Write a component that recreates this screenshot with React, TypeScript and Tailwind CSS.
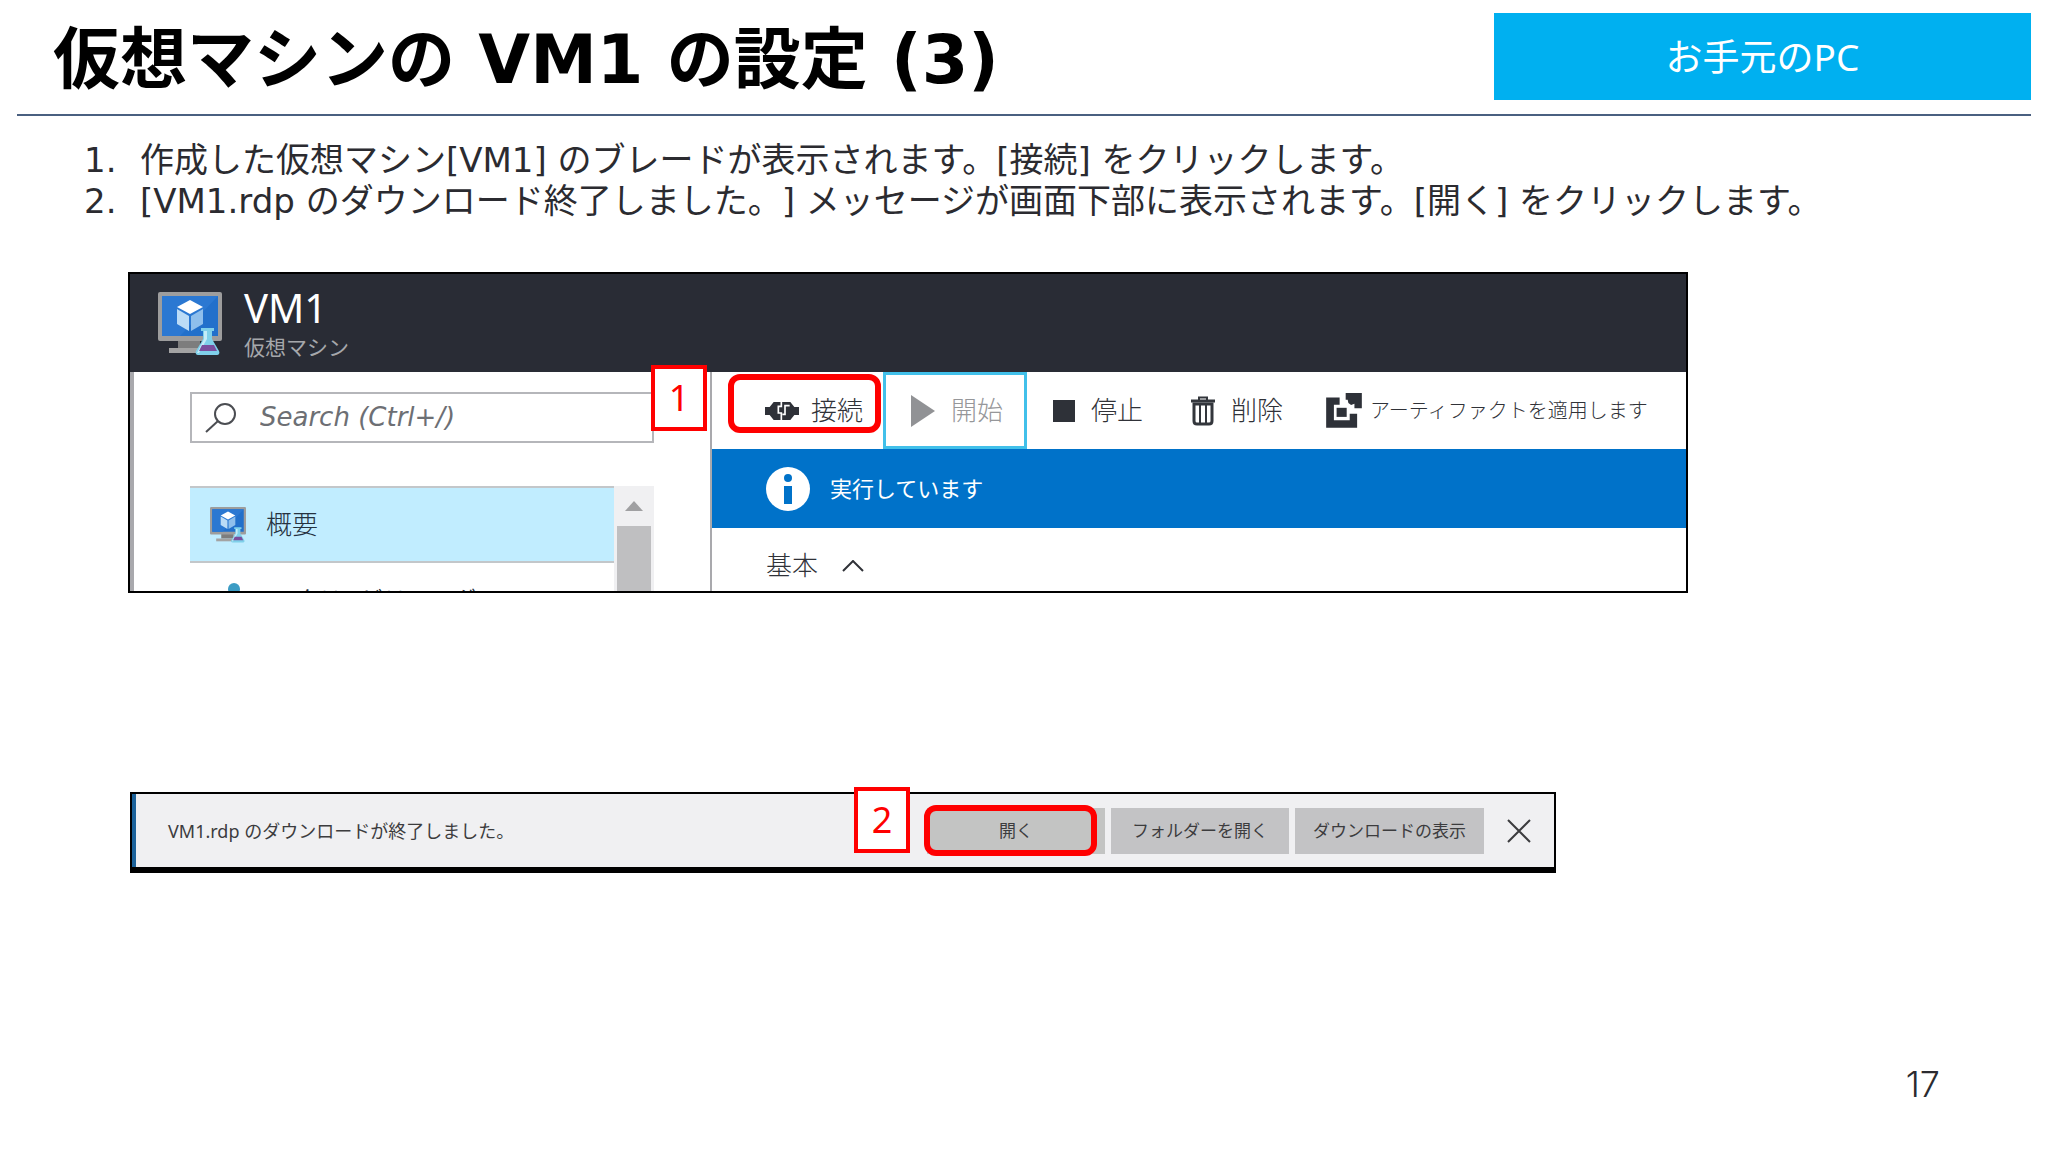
import type { ReactNode } from "react"

const steps = [
  "作成した仮想マシン[VM1] のブレードが表示されます。[接続] をクリックします。",
  "[VM1.rdp のダウンロード終了しました。] メッセージが画面下部に表示されます。[開く] をクリックします。",
]

function VmIcon({ className }: { className?: string }) {
  return (
    <svg viewBox="0 0 64 64" className={className} aria-hidden="true">
      <path d="M20 48h22v8h-22z" fill="#7d7d7d" />
      <path d="M11 56h38v5H11z" fill="#a3a3a3" />
      <rect x="0" y="0" width="64" height="49" rx="2" fill="#9d9d9d" />
      <path d="M4 4h56v40H4z" fill="#2270cb" />
      <path d="M4 4h56L22 44H4z" fill="#2b78d2" />
      <path d="M32 8l13 7-13 7-13-7z" fill="#fff" />
      <path d="M19 17l12 7v15l-12-7z" fill="#bcdcf6" />
      <path d="M45 17l-12 7v15l12-7z" fill="#8fbfec" />
      <path d="M43 36h13v3h-2v8l7 12c1 2 0 4-2 4H40c-2 0-3-2-2-4l7-12v-8h-2z" fill="#7fd0ea" />
      <path d="M46 39h3v8l-8 14h-2l7-14z" fill="#c4ecf8" />
      <path d="M44 53h12l3 6H41z" fill="#7a4f9e" />
    </svg>
  )
}

function ConnectIcon() {
  return (
    <svg viewBox="0 0 102 60" className="h-5 w-[34px]" aria-hidden="true">
      <path d="M0 18h14L26 3h50l12 15h14v24H88L76 57H26L14 42H0z" fill="#2e3138" />
      <path d="M49 0v16h-9v20h9v24" fill="none" stroke="#fff" strokeWidth="5" />
      <path d="M74 14H60v26h-8" fill="none" stroke="#fff" strokeWidth="5" />
    </svg>
  )
}

function TrashIcon() {
  return (
    <svg viewBox="0 0 24 30" className="h-[30px] w-6" fill="none" stroke="#33363c" aria-hidden="true">
      <path d="M0 5h24" strokeWidth="3" />
      <path d="M8 4V1.500h8V4" strokeWidth="2" />
      <path d="M3 8v17c0 2 1 3 3 3h12c2 0 3-1 3-3V8z" strokeWidth="3" />
      <path d="M9 8v19M15 8v19" strokeWidth="2" />
    </svg>
  )
}

function ArtifactIcon() {
  return (
    <svg viewBox="0 0 106 104" className="h-[35px] w-9" fill="#2e3138" aria-hidden="true">
      <path d="M0 13h40v22H23v46h47V62h22v41H0z" />
      <path d="M31 44h30v27H31z" />
      <path d="M58 0h48v45H84V32l-10 4-8-6-2-10h-6z" />
    </svg>
  )
}

function StepBadge({ className, children }: { className: string; children: ReactNode }) {
  return (
    <span
      className={`absolute z-10 flex h-[66px] w-14 items-center justify-center border-4 border-[#ff0000] bg-white text-4xl text-[#ff0000] ${className}`}
    >
      {children}
    </span>
  )
}

function ToolbarButton({ icon, label, className }: { icon: ReactNode; label: string; className: string }) {
  return (
    <button type="button" className={`flex shrink-0 items-center whitespace-nowrap ${className}`}>
      {icon}
      <span>{label}</span>
    </button>
  )
}

function VmBlade() {
  return (
    <section className="relative w-full max-w-[1560px]">
      <div className="flex h-[321px] flex-col overflow-hidden border-2 border-black">
        <div className="flex h-[98px] shrink-0 items-start gap-[22px] bg-[#292c35] pt-[18px] pl-7">
          <VmIcon className="size-16 shrink-0" />
          <div>
            <h2 className="text-[40px] leading-8 text-white">VM1</h2>
            <p className="text-[21px] leading-[46px] text-[#a5a7ab]">仮想マシン</p>
          </div>
        </div>

        <div className="flex min-h-0 flex-1">
          <div className="w-[582px] shrink-0 overflow-hidden border-r-2 border-l-4 border-[#a9a9ad] pt-5 pr-14 pl-14">
            <label className="flex h-[51px] items-center gap-6 border-2 border-[#b5b6ba] pl-3">
              <svg viewBox="0 0 32 30" className="h-[30px] w-8 shrink-0" fill="none" stroke="#4b4d52" strokeWidth="2" aria-hidden="true">
                <circle cx="21" cy="11" r="10" />
                <path d="M14 18L2 29" />
              </svg>
              <input
                type="text"
                aria-label="Search"
                placeholder="Search (Ctrl+/)"
                className="w-full min-w-0 font-['DejaVu_Sans',sans-serif] text-[26px] italic outline-none placeholder:text-[#6d6f74]"
              />
            </label>

            <div className="mt-[43px] flex">
              <ul className="flex-1">
                <li className="flex h-[77px] items-center gap-5 border-y-2 border-[#c3c7ca] bg-[#c1edff] pl-5">
                  <VmIcon className="size-9 shrink-0" />
                  <a href="#overview" className="text-[26px] font-light text-[#26323f]">概要</a>
                </li>
                <li className="flex h-[77px] items-start gap-9 pt-5 pl-[38px]">
                  <span className="size-3 rounded-full bg-[#3c9cc4]" />
                  <a href="#activity" className="text-[22px] leading-[30px] text-[#26323f]">アクティビティ ログ</a>
                </li>
              </ul>
              <div className="w-10 bg-[#f0f0f2] px-[3px]">
                <div className="flex h-10 items-center justify-center">
                  <svg viewBox="0 0 18 10" className="h-[10px] w-[18px]" aria-hidden="true">
                    <path d="M9 0l9 10H0z" fill="#a0a0a2" />
                  </svg>
                </div>
                <div className="h-28 bg-[#bfbfc1]" />
              </div>
            </div>
          </div>

          <div className="min-w-0 flex-1">
            <div className="flex h-[77px] text-[26px] font-light text-[#303238]">
              <div className="relative flex w-[171px] shrink-0">
                <ToolbarButton icon={<ConnectIcon />} label="接続" className="gap-3 pl-[53px]" />
                <span className="pointer-events-none absolute top-0.5 left-4 h-[59px] w-[153px] rounded-xl border-[6px] border-[#ff0000]" />
              </div>
              <ToolbarButton
                icon={
                  <svg viewBox="0 0 24 32" className="h-8 w-6" aria-hidden="true">
                    <path d="M0 0l24 16L0 32z" fill="#919295" />
                  </svg>
                }
                label="開始"
                className="w-36 gap-4 border-[3px] border-[#41c0ea] pl-[25px] text-[#96979a]"
              />
              <ToolbarButton
                icon={<span className="size-[22px] bg-[#2e3138]" />}
                label="停止"
                className="gap-4 pl-[26px]"
              />
              <ToolbarButton icon={<TrashIcon />} label="削除" className="gap-4 pl-12" />
              <ToolbarButton icon={<ArtifactIcon />} label="アーティファクトを適用します" className="gap-2 pl-[43px] text-xl" />
            </div>
            <div className="flex h-[79px] items-center gap-5 bg-[#0072c9] pl-[54px] text-[22px] text-white">
              <svg viewBox="0 0 44 44" className="size-11" aria-hidden="true">
                <circle cx="22" cy="22" r="22" fill="#fff" />
                <circle cx="22" cy="11" r="4" fill="#0072c9" />
                <path d="M18 19h8v18h-8z" fill="#0072c9" />
              </svg>
              <span>実行しています</span>
            </div>
            <button type="button" className="flex items-center gap-6 pt-[18px] pl-[54px] text-[26px] font-light text-[#303238]">
              基本
              <svg viewBox="0 0 22 12" className="h-3 w-[22px]" fill="none" stroke="#303238" strokeWidth="2" aria-hidden="true">
                <path d="M1 11L11 1l10 10" />
              </svg>
            </button>
          </div>
        </div>
      </div>
      <StepBadge className="top-[93px] left-[523px]">1</StepBadge>
    </section>
  )
}

function DownloadBar() {
  return (
    <section className="relative ml-0.5 w-full max-w-[1426px]">
      <div className="flex h-[81px] items-center border-2 border-b-[6px] border-black bg-[#f0f0f2] text-[17px] text-[#3c3c3e]">
        <span className="h-full w-1 bg-[#1d639b]" />
        <p className="pl-8 text-lg [text-spacing-trim:space-all]">VM1.rdp のダウンロードが終了しました。</p>
        <div className="ml-auto flex gap-[6px]">
          <div className="relative">
            <button type="button" className="h-[46px] w-[178px] bg-[#c3c4c3]">開く</button>
            <span className="pointer-events-none absolute -top-[3px] -left-[3px] h-[51px] w-[173px] rounded-xl border-[6px] border-[#ff0000]" />
          </div>
          <button type="button" className="h-[46px] w-[178px] bg-[#c3c3c5]">フォルダーを開く</button>
          <button type="button" className="h-[46px] w-[189px] bg-[#c3c3c5]">ダウンロードの表示</button>
        </div>
        <button type="button" aria-label="閉じる" className="flex w-[70px] justify-center">
          <svg viewBox="0 0 24 24" className="size-6" stroke="#3c3c3e" strokeWidth="2" aria-hidden="true">
            <path d="M1 1l22 22M23 1L1 23" />
          </svg>
        </button>
      </div>
      <StepBadge className="-top-[5px] left-[724px]">2</StepBadge>
    </section>
  )
}

export default function App() {
  return (
    <div className="flex min-h-screen flex-col bg-white font-['Noto_Sans','Noto_Sans_CJK_JP',sans-serif]">
      <header className="mx-[17px] flex items-start justify-between border-b-2 border-[#4a6080] pt-[13px] pb-[14px]">
        <h1 className="pt-2 pl-9 font-['DejaVu_Sans','Noto_Sans_CJK_JP',sans-serif] text-[67px] leading-[79px] font-bold whitespace-nowrap text-black">
          仮想マシンの VM1 の設定 (3)
        </h1>
        <div className="flex h-[87px] w-[537px] items-center justify-center bg-[#00b0f0] text-[37px] text-white">
          お手元のPC
        </div>
      </header>

      <main className="flex flex-1 flex-col px-32">
        <ol className="-ml-11 pt-6 font-['DejaVu_Sans','Noto_Sans_CJK_JP',sans-serif] text-[34px] leading-[41px] text-[#2b2b30] [text-spacing-trim:space-all]">
          {steps.map((step, index) => (
            <li key={step} className="flex whitespace-nowrap">
              <span className="w-14 shrink-0">{index + 1}.</span>
              {step}
            </li>
          ))}
        </ol>
        <div className="mt-[50px] flex flex-col gap-[199px]">
          <VmBlade />
          <DownloadBar />
        </div>
      </main>

      <footer className="flex justify-end pr-[108px] pb-12 font-['Inter',sans-serif] text-4xl font-light text-[#2b2b30]">
        17
      </footer>
    </div>
  )
}
